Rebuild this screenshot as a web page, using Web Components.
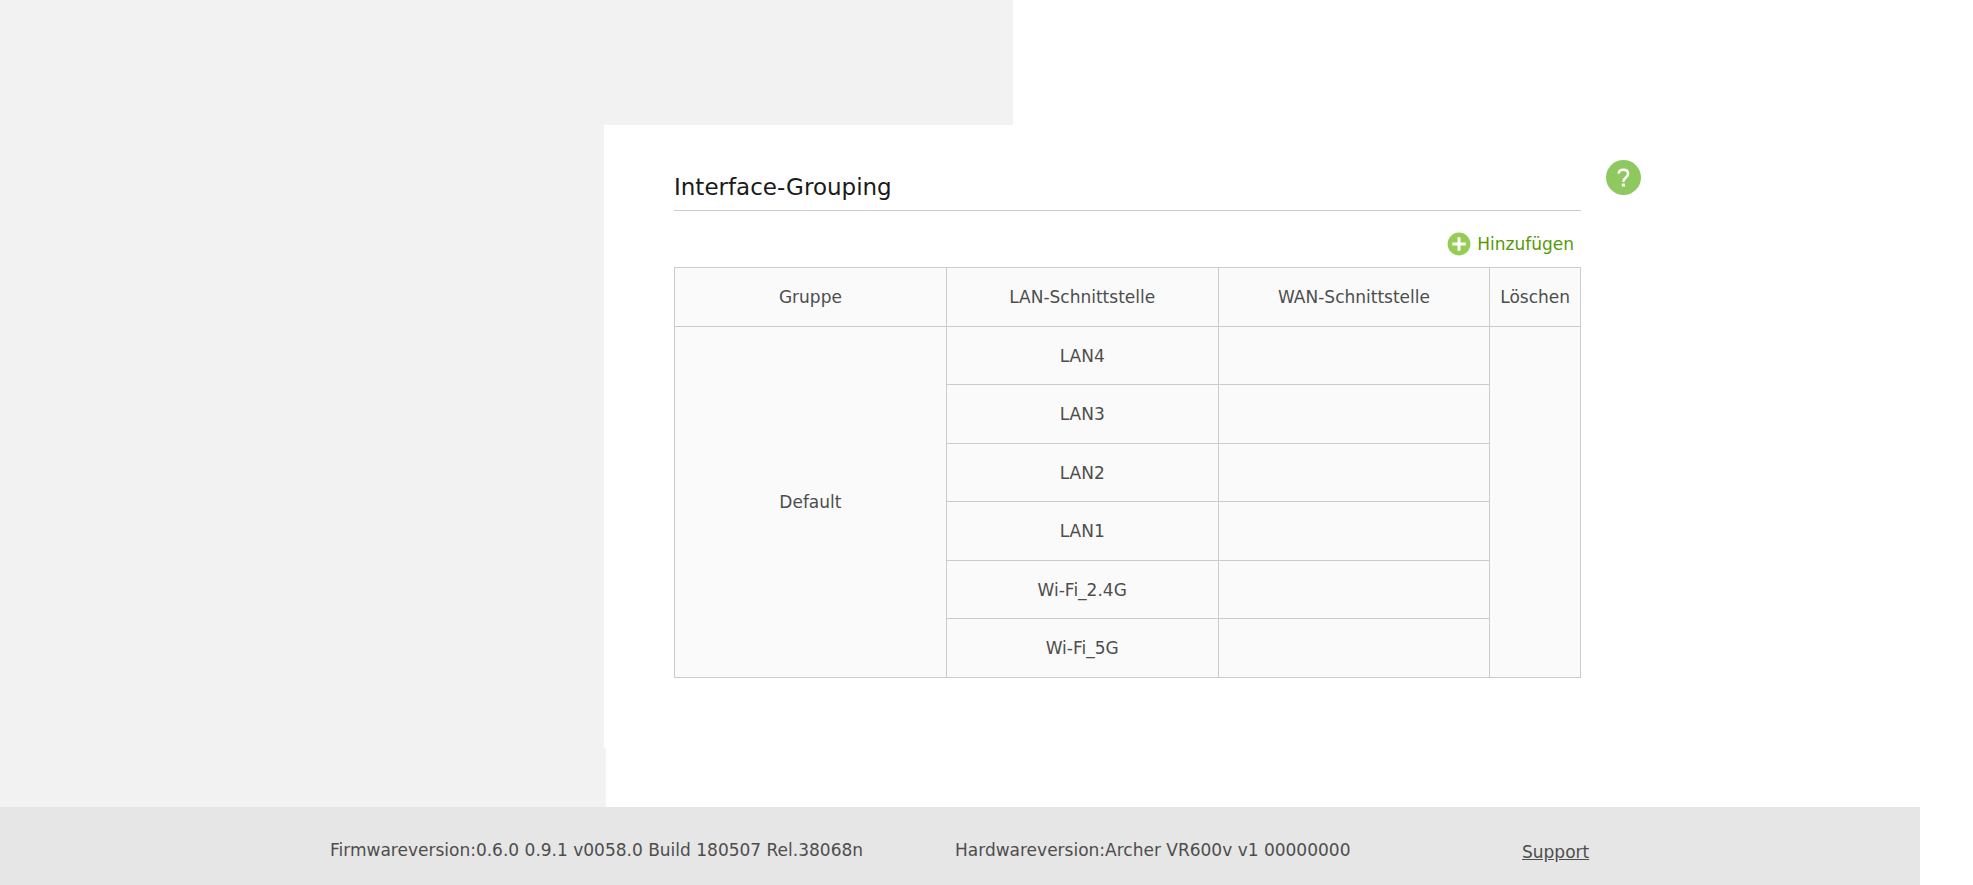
<!DOCTYPE html>
<html lang="de">
<head>
	<meta charset="utf-8">
	<title>Interface-Grouping</title>
	<style>
		body {
			margin: 0;
			background-color: #ffffff;
			color: #4d4d4d;
			font-family: Verdana, "DejaVu Sans", sans-serif;
			font-size: 17px;
			line-height: 20px;
		}
	</style>
</head>
<body>
	<router-page>
		<config-panel heading="Interface-Grouping">
			<help-button slot="help"></help-button>
			<add-button slot="tools">Hinzufügen</add-button>
			<group-table group="Default" interfaces="LAN4,LAN3,LAN2,LAN1,Wi-Fi_2.4G,Wi-Fi_5G"></group-table>
		</config-panel>
		<router-footer slot="footer">
			<span slot="firmware">Firmwareversion:0.6.0 0.9.1 v0058.0 Build 180507 Rel.38068n</span>
			<span slot="hardware">Hardwareversion:Archer VR600v v1 00000000</span>
		</router-footer>
	</router-page>

	<script>
		class RouterPage extends HTMLElement {
			constructor() {
				super();
				this.attachShadow({ mode: 'open' });
				this.shadowRoot.innerHTML = `
					<style>
						:host {
							display: flex;
							flex-direction: column;
							min-height: 100vh;
						}

						header {
							width: 1013px;
							max-width: 100%;
							height: 125px;
							background-color: #f2f2f2;
						}

						main {
							flex: 1;
							padding-left: 604px;
							background: linear-gradient(#f2f2f2, #f2f2f2) left / 606px 100% no-repeat;
						}
					</style>
					<header></header>
					<main><slot></slot></main>
					<slot name="footer"></slot>
				`;
			}
		}

		class ConfigPanel extends HTMLElement {
			constructor() {
				super();
				this.attachShadow({ mode: 'open' });
				this.shadowRoot.innerHTML = `
					<style>
						:host {
							display: flex;
							align-items: flex-start;
							gap: 25px;
							padding: 35px 0 70px 70px;
							background-color: #ffffff;
						}

						section {
							flex: 0 1 907px;
						}

						h1 {
							margin: 0;
							padding: 14px 0 9px;
							border-bottom: 1px solid #cccccc;
							color: #1a1a1a;
							font-size: 23px;
							font-weight: normal;
							line-height: 27px;
						}

						.tools {
							display: flex;
							justify-content: flex-end;
							padding: 21px 7px 11px;
						}
					</style>
					<section>
						<h1></h1>
						<div class="tools"><slot name="tools"></slot></div>
						<slot></slot>
					</section>
					<slot name="help"></slot>
				`;
			}

			connectedCallback() {
				this.shadowRoot.querySelector('h1').textContent = this.getAttribute('heading');
			}
		}

		class HelpButton extends HTMLElement {
			constructor() {
				super();
				this.attachShadow({ mode: 'open' });
				this.shadowRoot.innerHTML = `
					<style>
						:host {
							display: block;
						}

						button {
							display: block;
							padding: 0;
							border: 0;
							background: none;
							cursor: pointer;
						}

						svg {
							display: block;
						}
					</style>
					<button type="button" aria-label="Hilfe">
						<svg width="35" height="35" viewBox="0 0 35 35">
							<circle cx="17.5" cy="17.5" r="17.5" fill="#90c860" />
							<path d="M12.6 13.7c.2-2.5 2-3.9 4.8-3.9s4.7 1.5 4.7 4.1c0 3.7-4.7 3.7-4.7 7.9" fill="none" stroke="#ffffff" stroke-width="2.5" />
							<rect x="15.8" y="23.6" width="3.2" height="3" rx=".6" fill="#ffffff" />
						</svg>
					</button>
				`;
			}
		}

		class AddButton extends HTMLElement {
			constructor() {
				super();
				this.attachShadow({ mode: 'open' });
				this.shadowRoot.innerHTML = `
					<style>
						:host {
							display: block;
						}

						button {
							display: flex;
							align-items: center;
							gap: 6px;
							padding: 0;
							border: 0;
							background: none;
							color: #559b05;
							font: inherit;
							line-height: 24px;
							cursor: pointer;
						}
					</style>
					<button type="button">
						<svg width="24" height="24" viewBox="0 0 24 24">
							<circle cx="12" cy="12" r="11.4" fill="#95cc54" />
							<path d="M12 5.3v13.4M5.3 12h13.4" stroke="#ffffff" stroke-width="3" />
						</svg>
						<slot></slot>
					</button>
				`;
			}
		}

		class GroupTable extends HTMLElement {
			constructor() {
				super();
				this.attachShadow({ mode: 'open' });
				this.shadowRoot.innerHTML = `
					<style>
						:host {
							display: block;
						}

						table {
							width: 100%;
							border-collapse: collapse;
							table-layout: fixed;
							background-color: #fafafa;
						}

						th, td {
							height: 57px;
							padding: 0;
							border: 1px solid #cccccc;
							font-weight: normal;
							text-align: center;
						}

						th, tr:nth-child(even) td {
							height: 58px;
						}

						.wide {
							width: 30%;
						}

						.narrow {
							width: 10%;
						}
					</style>
					<table>
						<colgroup>
							<col class="wide">
							<col class="wide">
							<col class="wide">
							<col class="narrow">
						</colgroup>
						<thead>
							<tr>
								<th>Gruppe</th>
								<th>LAN-Schnittstelle</th>
								<th>WAN-Schnittstelle</th>
								<th>Löschen</th>
							</tr>
						</thead>
						<tbody></tbody>
					</table>
				`;
			}

			connectedCallback() {
				const names = this.getAttribute('interfaces').split(',');
				const body = this.shadowRoot.querySelector('tbody');
				names.forEach((name, index) => {
					const row = body.insertRow();
					if (index === 0) {
						this.#addCell(row, this.getAttribute('group'), names.length);
					}
					this.#addCell(row, name);
					this.#addCell(row, '');
					if (index === 0) {
						this.#addCell(row, '', names.length);
					}
				});
			}

			#addCell(row, text, span = 1) {
				const cell = row.insertCell();
				cell.textContent = text;
				cell.rowSpan = span;
			}
		}

		class RouterFooter extends HTMLElement {
			constructor() {
				super();
				this.attachShadow({ mode: 'open' });
				this.shadowRoot.innerHTML = `
					<style>
						:host {
							display: block;
							margin-right: 53px;
							background-color: #e6e6e6;
						}

						footer {
							display: grid;
							grid-template-columns: 625px 567px auto;
							align-items: start;
							padding: 32px 0 22px 330px;
							line-height: 22px;
						}

						a {
							justify-self: start;
							padding-top: 2px;
							color: inherit;
						}
					</style>
					<footer>
						<slot name="firmware"></slot>
						<slot name="hardware"></slot>
						<a href="#support">Support</a>
					</footer>
				`;
			}
		}

		customElements.define('router-page', RouterPage);
		customElements.define('config-panel', ConfigPanel);
		customElements.define('help-button', HelpButton);
		customElements.define('add-button', AddButton);
		customElements.define('group-table', GroupTable);
		customElements.define('router-footer', RouterFooter);
	</script>
</body>
</html>
